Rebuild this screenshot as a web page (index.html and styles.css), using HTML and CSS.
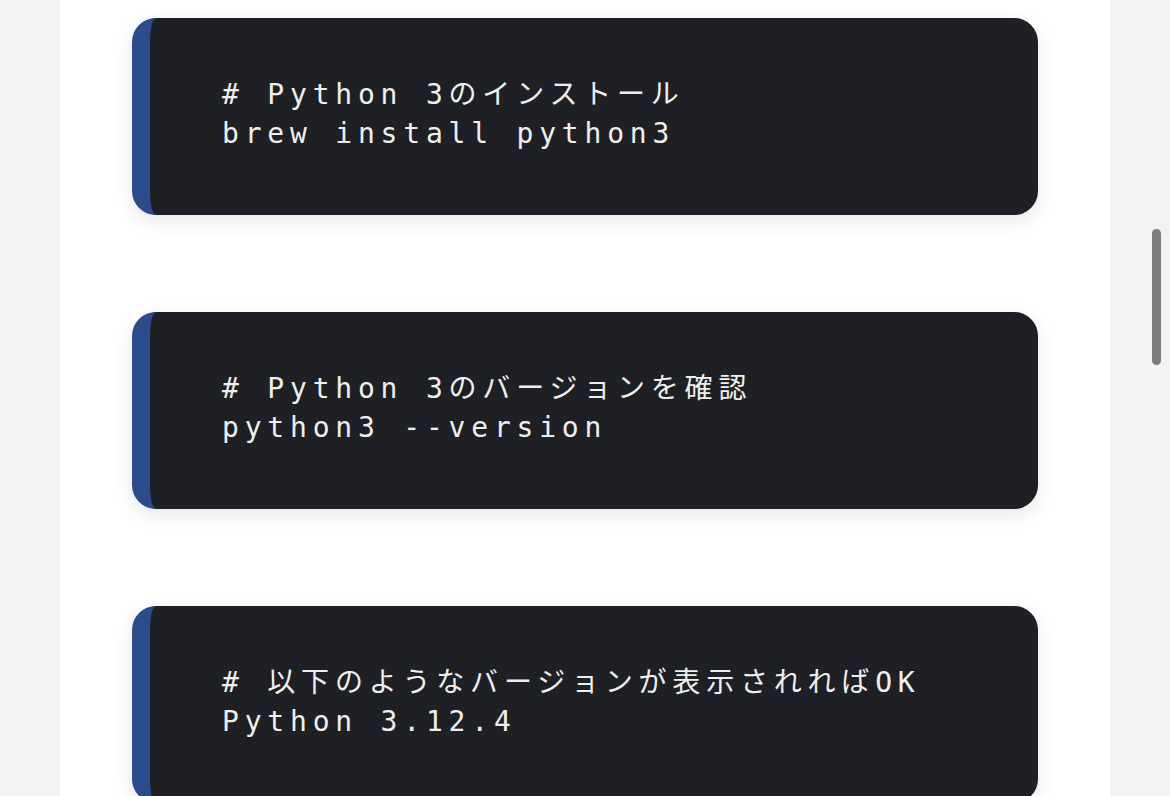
FILE: index.html
```html
<!DOCTYPE html>
<html lang="ja">
<head>
<meta charset="utf-8">
<title>Python install</title>
<link rel="stylesheet" href="styles.css">
</head>
<body>
<main class="page">
  <pre class="code"><code># Python 3のインストール
brew install python3</code></pre>
  <pre class="code"><code># Python 3のバージョンを確認
python3 --version</code></pre>
  <pre class="code"><code># 以下のようなバージョンが表示されればOK
Python 3.12.4</code></pre>
</main>
<div class="scrollbar"></div>
</body>
</html>
```

FILE: styles.css
```css
html, body {
  margin: 0;
  padding: 0;
  height: 796px;
  overflow: hidden;
  background: #f2f2f2;
}

.page {
  margin-left: 60px;
  width: 1050px;
  box-sizing: border-box;
  min-height: 796px;
  background: #ffffff;
  padding: 18px 72px 0;
  display: flex;
  flex-direction: column;
  gap: 97px;
}

.code {
  margin: 0;
  background: #1f2025;
  border-left: 18px solid #2b4b8b;
  border-radius: 24px;
  padding: 57px 70px 62px 72px;
  box-shadow: 0 6px 20px rgba(0, 0, 0, 0.10);
  color: #efefef;
  font-family: "DejaVu Sans Mono", "Noto Sans CJK JP", monospace;
  font-size: 28px;
  line-height: 39px;
  letter-spacing: 5.8px;
  white-space: pre;
}

.code code {
  font-family: inherit;
}

.scrollbar {
  position: absolute;
  left: 1152px;
  top: 229px;
  width: 9px;
  height: 136px;
  border-radius: 5px;
  background: #7c7c7c;
}
```
